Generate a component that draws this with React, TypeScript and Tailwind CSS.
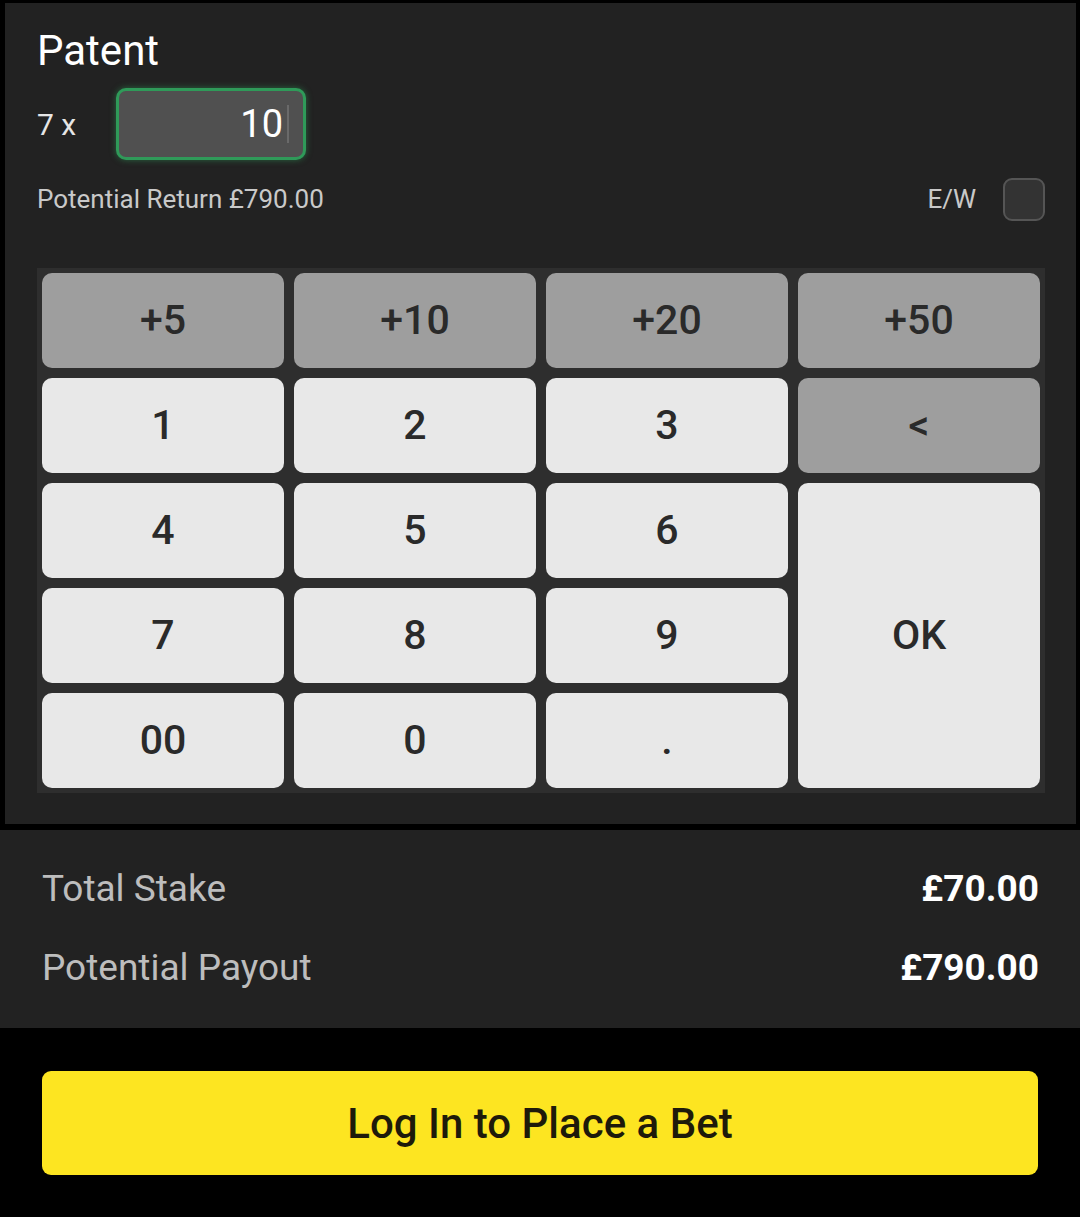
import { useState } from "react"

// bet slip: patent stake entry with a numeric keypad
const quickKeys = ["+5", "+10", "+20", "+50"]

function Key({ label, tone = "light", className = "" }: { label: string; tone?: "light" | "dark"; className?: string }) {
  const bg = tone === "dark" ? "bg-[#9e9e9e]" : "bg-[#e8e8e8]"
  return (
    <button
      className={`${bg} ${className} rounded-[10px] flex items-center justify-center text-[41px] font-medium text-[#2a2a2a]`}
    >
      {label}
    </button>
  )
}

export default function App() {
  const [stake] = useState("10")
  const lines = 7

  return (
    <div className="w-[1080px] h-[1217px] bg-black font-['Roboto',sans-serif] flex flex-col">
      {/* stake panel */}
      <div className="mt-[3px] ml-[5px] mr-[4px] h-[821px] bg-[#222222] pl-[32px] pr-[31px] pt-[24px]">
        <h1 className="text-[42px] leading-[48px] text-white">Patent</h1>

        <div className="mt-[13px] flex items-center">
          <span className="text-[30px] text-[#e6e6e6] w-[79px]">{lines} x</span>
          <div className="w-[190px] h-[72px] rounded-[10px] border-[3px] border-[#2f9a59] shadow-[0_0_6px_rgba(46,160,90,0.55)] bg-[#505050] flex items-center justify-end pr-[14px]">
            <span className="text-[38px] text-white">{stake}</span>
            <span className="ml-[4px] w-[2px] h-[38px] bg-[#6a6a6a]" />
          </div>
        </div>

        <div className="mt-[18px] h-[43px] flex items-center justify-between">
          <span className="text-[26px] text-[#c9c9c9]">Potential Return £790.00</span>
          <div className="flex items-center gap-[27px]">
            <span className="text-[26px] text-[#c9c9c9]">E/W</span>
            <div className="w-[42px] h-[43px] rounded-[9px] border-2 border-[#555555] bg-[#333333]" />
          </div>
        </div>

        {/* keypad */}
        <div className="mt-[47px] bg-[#2e2e2e] p-[5px] grid grid-cols-4 grid-rows-5 gap-[10px] h-[525px]">
          {quickKeys.map((k) => (
            <Key key={k} label={k} tone="dark" />
          ))}
          <Key label="1" />
          <Key label="2" />
          <Key label="3" />
          <Key label="<" tone="dark" />
          <Key label="4" />
          <Key label="5" />
          <Key label="6" />
          <Key label="OK" className="row-span-3" />
          <Key label="7" />
          <Key label="8" />
          <Key label="9" />
          <Key label="00" />
          <Key label="0" />
          <Key label="." />
        </div>
      </div>

      {/* totals */}
      <div className="mt-[6px] h-[198px] bg-[#222222] pl-[42px] pr-[41px] pt-[39px] flex flex-col gap-[39px]">
        <div className="flex items-center justify-between h-[40px]">
          <span className="text-[37px] text-[#bdbdbd]">Total Stake</span>
          <span className="text-[37px] font-bold text-white">£70.00</span>
        </div>
        <div className="flex items-center justify-between h-[40px]">
          <span className="text-[37px] text-[#bdbdbd]">Potential Payout</span>
          <span className="text-[37px] font-bold text-white">£790.00</span>
        </div>
      </div>

      <div className="px-[42px] pt-[43px]">
        <button className="w-full h-[104px] rounded-[9px] bg-[#fde521] text-[42px] font-medium text-[#1e1a0a]">
          Log In to Place a Bet
        </button>
      </div>
    </div>
  )
}
